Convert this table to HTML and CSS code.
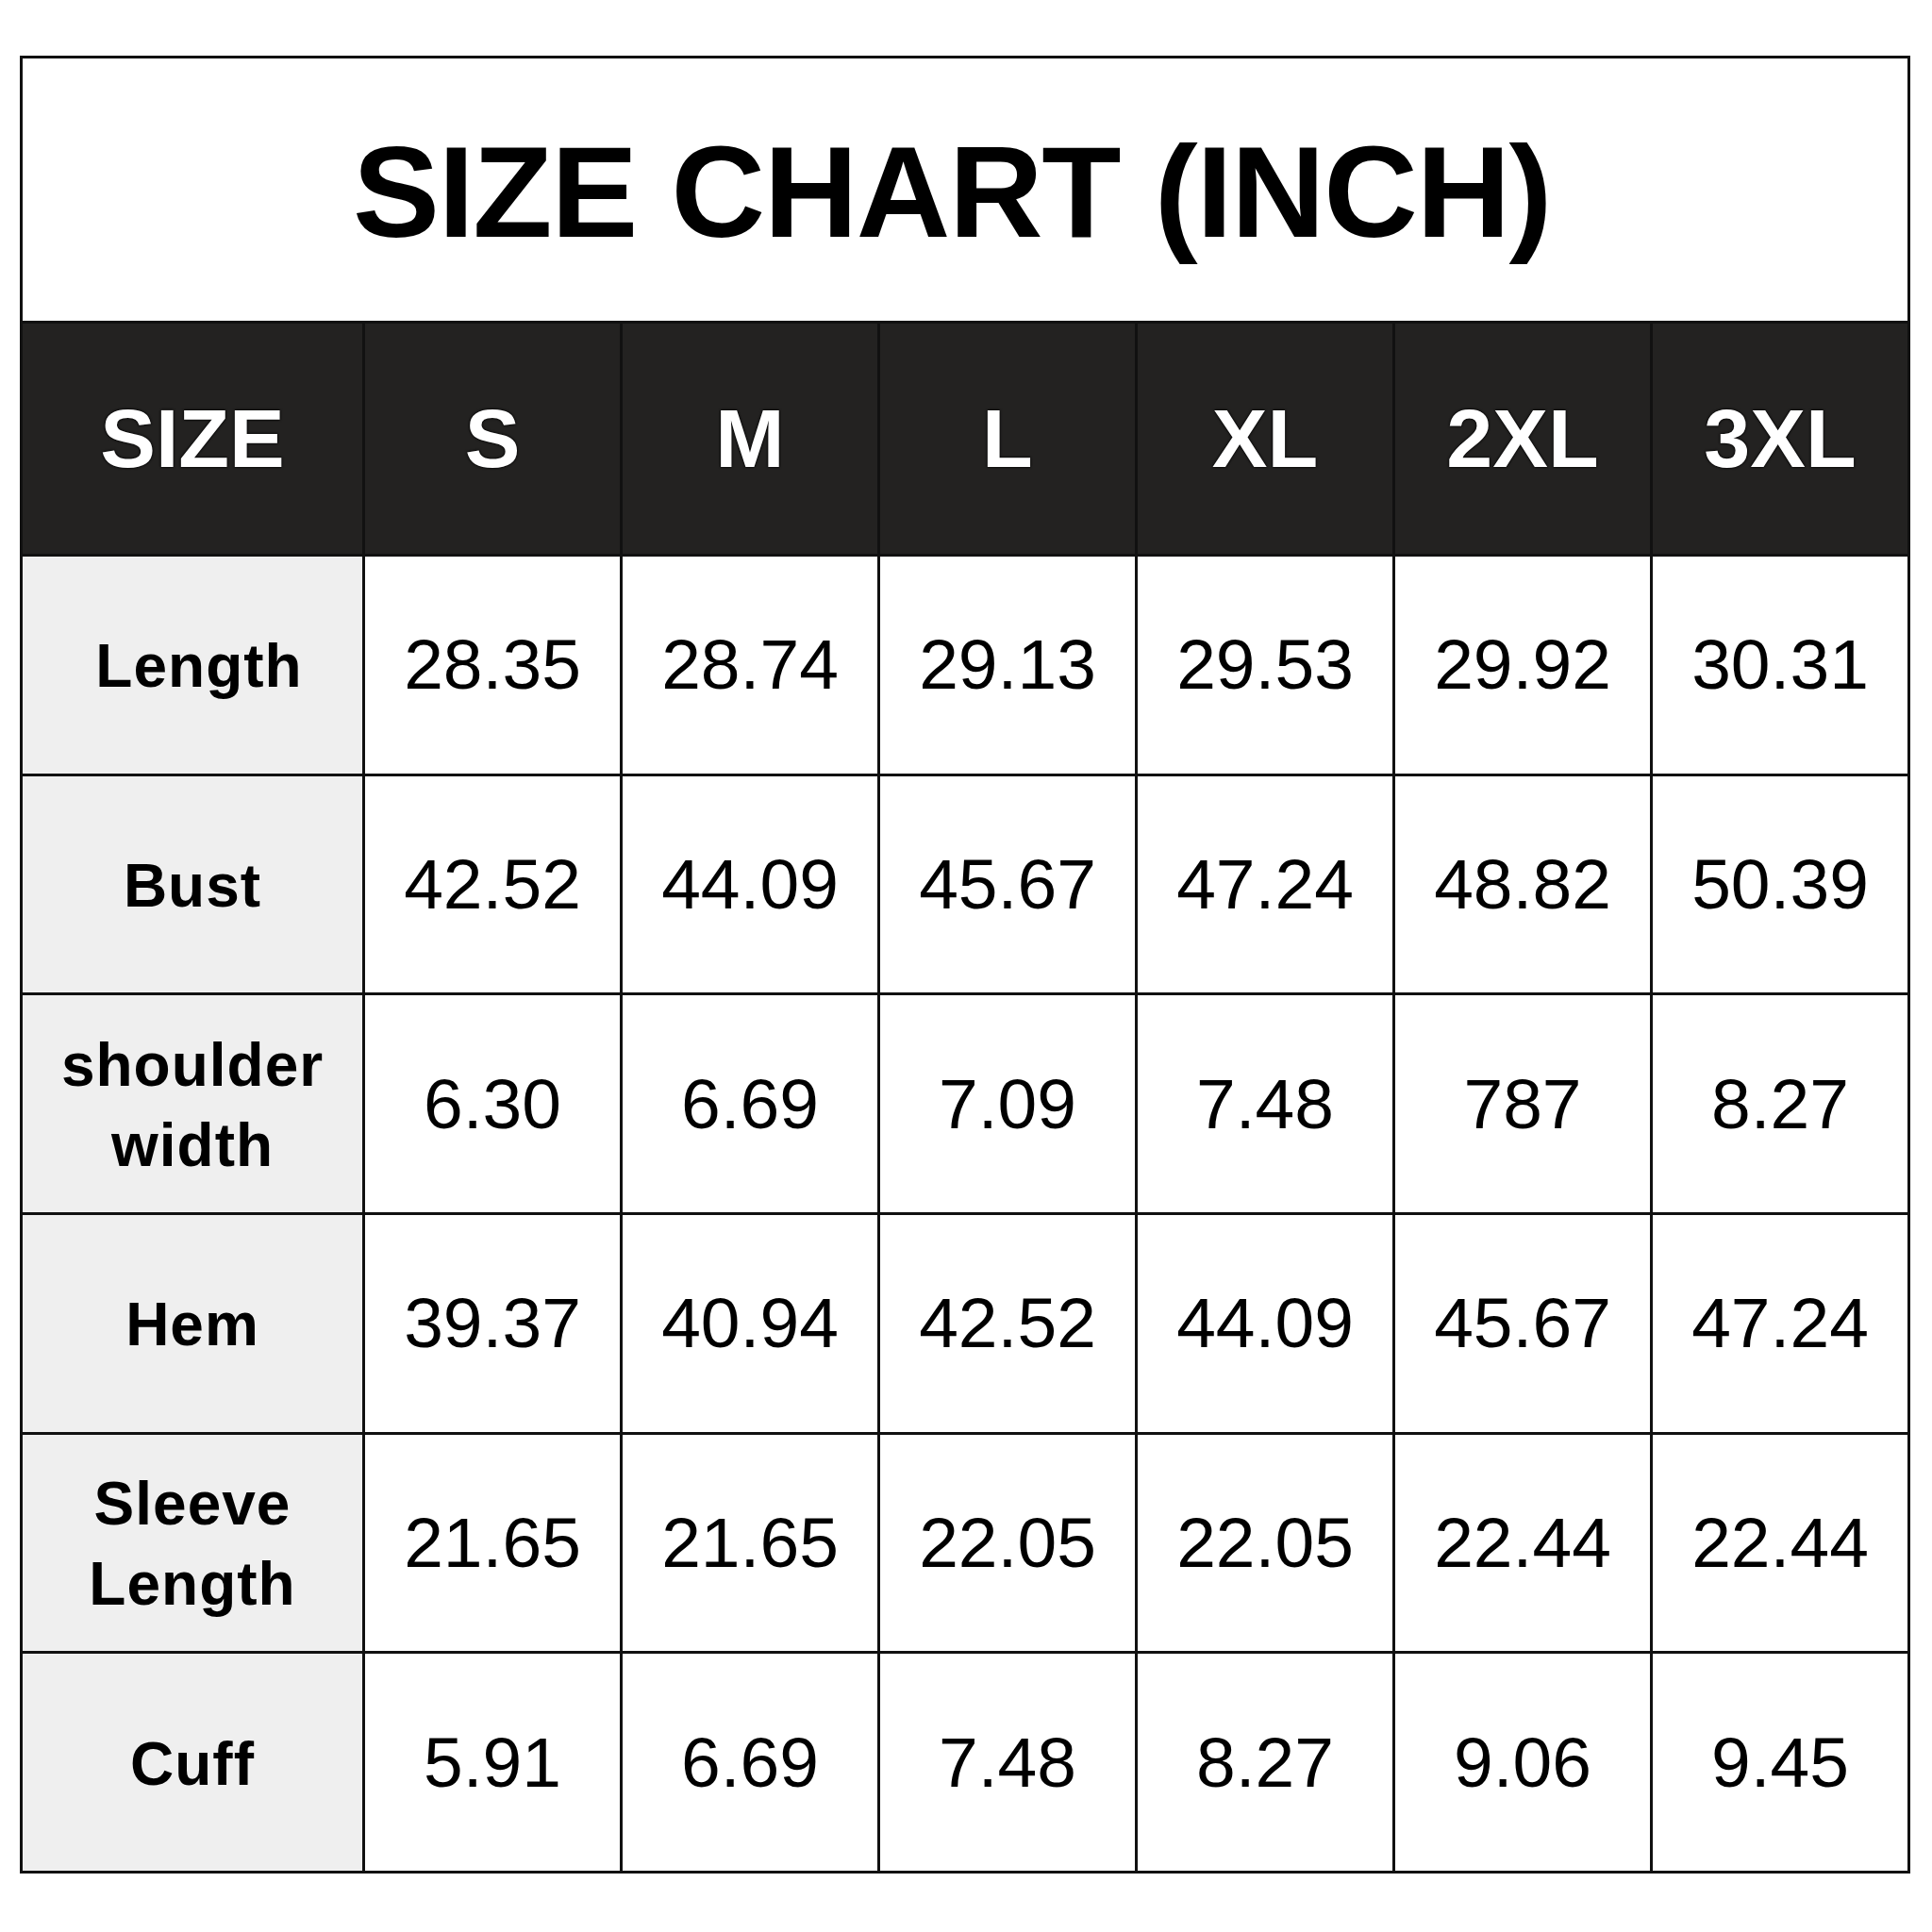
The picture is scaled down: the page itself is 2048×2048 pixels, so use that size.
FILE: index.html
```html
<!DOCTYPE html>
<html>
<head>
<meta charset="utf-8">
<link rel="stylesheet" href="styles.css">
</head>
<body>
<div class="chart">
  <div class="title">SIZE CHART (INCH)</div>

  <div class="hd">SIZE</div>
  <div class="hd">S</div>
  <div class="hd">M</div>
  <div class="hd">L</div>
  <div class="hd">XL</div>
  <div class="hd">2XL</div>
  <div class="hd">3XL</div>

  <div class="lb lb-shift">Length</div>
  <div class="dc">28.35</div><div class="dc">28.74</div><div class="dc">29.13</div><div class="dc">29.53</div><div class="dc">29.92</div><div class="dc">30.31</div>

  <div class="lb">Bust</div>
  <div class="dc">42.52</div><div class="dc">44.09</div><div class="dc">45.67</div><div class="dc">47.24</div><div class="dc">48.82</div><div class="dc">50.39</div>

  <div class="lb">shoulder<br>width</div>
  <div class="dc">6.30</div><div class="dc">6.69</div><div class="dc">7.09</div><div class="dc">7.48</div><div class="dc">787</div><div class="dc">8.27</div>

  <div class="lb">Hem</div>
  <div class="dc">39.37</div><div class="dc">40.94</div><div class="dc">42.52</div><div class="dc">44.09</div><div class="dc">45.67</div><div class="dc">47.24</div>

  <div class="lb">Sleeve<br>Length</div>
  <div class="dc">21.65</div><div class="dc">21.65</div><div class="dc">22.05</div><div class="dc">22.05</div><div class="dc">22.44</div><div class="dc">22.44</div>

  <div class="lb">Cuff</div>
  <div class="dc">5.91</div><div class="dc">6.69</div><div class="dc">7.48</div><div class="dc">8.27</div><div class="dc">9.06</div><div class="dc">9.45</div>
</div>
</body>
</html>
```

FILE: styles.css
```css
html, body {
  margin: 0;
  padding: 0;
  background: #ffffff;
}

body {
  width: 2048px;
  height: 2048px;
  font-family: "Liberation Sans", Arial, sans-serif;
}

.chart {
  box-sizing: border-box;
  margin: 59px 0 0 21px;
  width: 2004px;
  height: 1927px;
  border: 3px solid #111111;
  background: #111111;
  display: grid;
  grid-template-columns: 360px repeat(6, 1fr);
  grid-template-rows: 278px 244px repeat(6, 1fr);
  gap: 3px;
}

.title {
  grid-column: 1 / -1;
  background: #ffffff;
  display: flex;
  align-items: center;
  justify-content: center;
  padding-right: 28px;
  padding-top: 4px;
  font-size: 138px;
  font-weight: 700;
  letter-spacing: -1.5px;
  line-height: 1;
  color: #000000;
}

.hd {
  background: #232221;
  color: #ffffff;
  display: flex;
  align-items: center;
  justify-content: center;
  font-size: 88px;
  font-weight: 700;
  line-height: 1;
  text-shadow: 0 0 3px #000000, 0 0 2px #000000;
}

.lb {
  background: #efefef;
  color: #000000;
  display: flex;
  align-items: center;
  justify-content: center;
  text-align: center;
  font-size: 64px;
  font-weight: 700;
  letter-spacing: 1px;
  line-height: 85px;
  padding-top: 4px;
}

.lb-shift {
  padding-left: 14px;
}

.dc {
  background: #ffffff;
  color: #000000;
  display: flex;
  align-items: center;
  justify-content: center;
  font-size: 75px;
  font-weight: 400;
  line-height: 1;
}
```
